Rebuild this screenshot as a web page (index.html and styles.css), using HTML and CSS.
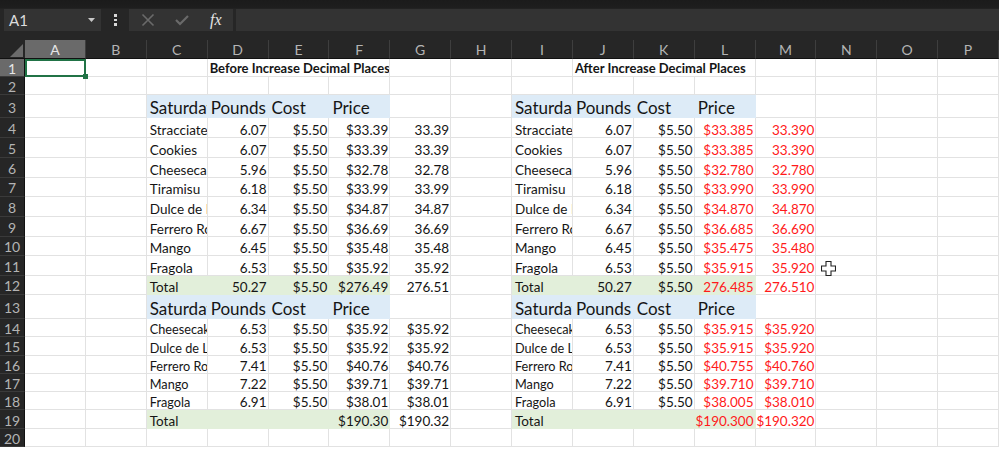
FILE: index.html
```html
<!DOCTYPE html>
<html lang="en">
<head>
<meta charset="utf-8">
<title>Increase Decimal Places</title>
<link rel="stylesheet" href="styles.css">
</head>
<body>
<header class="formula-bar">
  <div class="name-box"><span>A1</span><svg class="caret" width="7" height="4" viewBox="0 0 7 4"><path d="M0 0h7L3.5 4z" fill="#c8c8c8"/></svg></div>
  <div class="dots"><b></b><b></b><b></b></div>
  <div class="buttons">
    <svg class="btn-icon" width="14" height="14" viewBox="0 0 14 14"><path d="M1.500 1.500l11 11M12.500 1.500l-11 11" stroke="#6a6a6a" stroke-width="1.600" fill="none"/></svg>
    <svg class="btn-icon" width="14" height="14" viewBox="0 0 14 14"><path d="M1 7l4 4 8-8" stroke="#6a6a6a" stroke-width="2.200" fill="none"/></svg>
    <span class="fx">fx</span>
  </div>
  <div class="formula-input"></div>
</header>
<main class="sheet">
  <div class="h corner"><svg width="25" height="19" viewBox="0 0 25 19"><path d="M10 17L23 4v13z" fill="#6b6b6b"/></svg></div>
  <div class="h sel">A</div><div class="h">B</div><div class="h">C</div><div class="h">D</div><div class="h">E</div><div class="h">F</div><div class="h">G</div><div class="h">H</div><div class="h">I</div><div class="h">J</div><div class="h">K</div><div class="h">L</div><div class="h">M</div><div class="h">N</div><div class="h">O</div><div class="h">P</div>

  <div class="rh sel">1</div><div class="c active"><span class="handle"></span></div><div class="c"></div><div class="c"></div><div class="c b span3">Before Increase Decimal Places</div><div class="c"></div><div class="c"></div><div class="c"></div><div class="c b span3">After Increase Decimal Places</div><div class="c"></div><div class="c"></div><div class="c"></div><div class="c"></div>

  <div class="rh">2</div><div class="c"></div><div class="c"></div><div class="c"></div><div class="c"></div><div class="c"></div><div class="c"></div><div class="c"></div><div class="c"></div><div class="c"></div><div class="c"></div><div class="c"></div><div class="c"></div><div class="c"></div><div class="c"></div><div class="c"></div><div class="c"></div>

  <div class="rh">3</div><div class="c"></div><div class="c"></div><div class="c hd">Saturday</div><div class="c hd">Pounds</div><div class="c hd">Cost</div><div class="c hd">Price</div><div class="c"></div><div class="c"></div><div class="c hd">Saturday</div><div class="c hd">Pounds</div><div class="c hd">Cost</div><div class="c hd">Price</div><div class="c"></div><div class="c"></div><div class="c"></div><div class="c"></div>

  <div class="rh">4</div><div class="c"></div><div class="c"></div><div class="c">Stracciatella</div><div class="c n">6.07</div><div class="c n">$5.50</div><div class="c n">$33.39</div><div class="c n">33.39</div><div class="c"></div><div class="c">Stracciatella</div><div class="c n">6.07</div><div class="c n">$5.50</div><div class="c n red">$33.385</div><div class="c n red">33.390</div><div class="c"></div><div class="c"></div><div class="c"></div>

  <div class="rh">5</div><div class="c"></div><div class="c"></div><div class="c">Cookies</div><div class="c n">6.07</div><div class="c n">$5.50</div><div class="c n">$33.39</div><div class="c n">33.39</div><div class="c"></div><div class="c">Cookies</div><div class="c n">6.07</div><div class="c n">$5.50</div><div class="c n red">$33.385</div><div class="c n red">33.390</div><div class="c"></div><div class="c"></div><div class="c"></div>

  <div class="rh">6</div><div class="c"></div><div class="c"></div><div class="c">Cheesecake</div><div class="c n">5.96</div><div class="c n">$5.50</div><div class="c n">$32.78</div><div class="c n">32.78</div><div class="c"></div><div class="c">Cheesecake</div><div class="c n">5.96</div><div class="c n">$5.50</div><div class="c n red">$32.780</div><div class="c n red">32.780</div><div class="c"></div><div class="c"></div><div class="c"></div>

  <div class="rh">7</div><div class="c"></div><div class="c"></div><div class="c">Tiramisu</div><div class="c n">6.18</div><div class="c n">$5.50</div><div class="c n">$33.99</div><div class="c n">33.99</div><div class="c"></div><div class="c">Tiramisu</div><div class="c n">6.18</div><div class="c n">$5.50</div><div class="c n red">$33.990</div><div class="c n red">33.990</div><div class="c"></div><div class="c"></div><div class="c"></div>

  <div class="rh">8</div><div class="c"></div><div class="c"></div><div class="c">Dulce de Leche</div><div class="c n">6.34</div><div class="c n">$5.50</div><div class="c n">$34.87</div><div class="c n">34.87</div><div class="c"></div><div class="c">Dulce de Leche</div><div class="c n">6.34</div><div class="c n">$5.50</div><div class="c n red">$34.870</div><div class="c n red">34.870</div><div class="c"></div><div class="c"></div><div class="c"></div>

  <div class="rh">9</div><div class="c"></div><div class="c"></div><div class="c">Ferrero Rocher</div><div class="c n">6.67</div><div class="c n">$5.50</div><div class="c n">$36.69</div><div class="c n">36.69</div><div class="c"></div><div class="c">Ferrero Rocher</div><div class="c n">6.67</div><div class="c n">$5.50</div><div class="c n red">$36.685</div><div class="c n red">36.690</div><div class="c"></div><div class="c"></div><div class="c"></div>

  <div class="rh">10</div><div class="c"></div><div class="c"></div><div class="c">Mango</div><div class="c n">6.45</div><div class="c n">$5.50</div><div class="c n">$35.48</div><div class="c n">35.48</div><div class="c"></div><div class="c">Mango</div><div class="c n">6.45</div><div class="c n">$5.50</div><div class="c n red">$35.475</div><div class="c n red">35.480</div><div class="c"></div><div class="c"></div><div class="c"></div>

  <div class="rh">11</div><div class="c"></div><div class="c"></div><div class="c">Fragola</div><div class="c n">6.53</div><div class="c n">$5.50</div><div class="c n">$35.92</div><div class="c n">35.92</div><div class="c"></div><div class="c">Fragola</div><div class="c n">6.53</div><div class="c n">$5.50</div><div class="c n red">$35.915</div><div class="c n red">35.920</div><div class="c"></div><div class="c"></div><div class="c"></div>

  <div class="rh">12</div><div class="c"></div><div class="c"></div><div class="c tot">Total</div><div class="c tot n">50.27</div><div class="c tot n">$5.50</div><div class="c tot n">$276.49</div><div class="c n">276.51</div><div class="c"></div><div class="c tot">Total</div><div class="c tot n">50.27</div><div class="c tot n">$5.50</div><div class="c tot n red">276.485</div><div class="c n red">276.510</div><div class="c"></div><div class="c"></div><div class="c"></div>

  <div class="rh">13</div><div class="c"></div><div class="c"></div><div class="c hd">Saturday</div><div class="c hd">Pounds</div><div class="c hd">Cost</div><div class="c hd">Price</div><div class="c"></div><div class="c"></div><div class="c hd">Saturday</div><div class="c hd">Pounds</div><div class="c hd">Cost</div><div class="c hd">Price</div><div class="c"></div><div class="c"></div><div class="c"></div><div class="c"></div>

  <div class="rh">14</div><div class="c"></div><div class="c"></div><div class="c sm">Cheesecake</div><div class="c n">6.53</div><div class="c n">$5.50</div><div class="c n">$35.92</div><div class="c n">$35.92</div><div class="c"></div><div class="c sm">Cheesecake</div><div class="c n">6.53</div><div class="c n">$5.50</div><div class="c n red">$35.915</div><div class="c n red">$35.920</div><div class="c"></div><div class="c"></div><div class="c"></div>

  <div class="rh">15</div><div class="c"></div><div class="c"></div><div class="c sm">Dulce de Leche</div><div class="c n">6.53</div><div class="c n">$5.50</div><div class="c n">$35.92</div><div class="c n">$35.92</div><div class="c"></div><div class="c sm">Dulce de Leche</div><div class="c n">6.53</div><div class="c n">$5.50</div><div class="c n red">$35.915</div><div class="c n red">$35.920</div><div class="c"></div><div class="c"></div><div class="c"></div>

  <div class="rh">16</div><div class="c"></div><div class="c"></div><div class="c sm">Ferrero Rocher</div><div class="c n">7.41</div><div class="c n">$5.50</div><div class="c n">$40.76</div><div class="c n">$40.76</div><div class="c"></div><div class="c sm">Ferrero Rocher</div><div class="c n">7.41</div><div class="c n">$5.50</div><div class="c n red">$40.755</div><div class="c n red">$40.760</div><div class="c"></div><div class="c"></div><div class="c"></div>

  <div class="rh">17</div><div class="c"></div><div class="c"></div><div class="c sm">Mango</div><div class="c n">7.22</div><div class="c n">$5.50</div><div class="c n">$39.71</div><div class="c n">$39.71</div><div class="c"></div><div class="c sm">Mango</div><div class="c n">7.22</div><div class="c n">$5.50</div><div class="c n red">$39.710</div><div class="c n red">$39.710</div><div class="c"></div><div class="c"></div><div class="c"></div>

  <div class="rh">18</div><div class="c"></div><div class="c"></div><div class="c sm">Fragola</div><div class="c n">6.91</div><div class="c n">$5.50</div><div class="c n">$38.01</div><div class="c n">$38.01</div><div class="c"></div><div class="c sm">Fragola</div><div class="c n">6.91</div><div class="c n">$5.50</div><div class="c n red">$38.005</div><div class="c n red">$38.010</div><div class="c"></div><div class="c"></div><div class="c"></div>

  <div class="rh">19</div><div class="c"></div><div class="c"></div><div class="c tot">Total</div><div class="c tot"></div><div class="c tot"></div><div class="c tot n">$190.30</div><div class="c n">$190.32</div><div class="c"></div><div class="c tot">Total</div><div class="c tot"></div><div class="c tot"></div><div class="c tot n red">$190.300</div><div class="c n red">$190.320</div><div class="c"></div><div class="c"></div><div class="c"></div>

  <div class="rh">20</div><div class="c"></div><div class="c"></div><div class="c"></div><div class="c"></div><div class="c"></div><div class="c"></div><div class="c"></div><div class="c"></div><div class="c"></div><div class="c"></div><div class="c"></div><div class="c"></div><div class="c"></div><div class="c"></div><div class="c"></div><div class="c"></div>

  <svg class="cursor" width="15" height="15" viewBox="0 0 15 15"><path d="M5 .5h5v4.500h4.500v5H10v4.500H5V10H.5V5H5z" fill="#fff" stroke="#222" stroke-width="1.100"/></svg>
</main>
</body>
</html>
```
FILE: styles.css
```css
* { box-sizing: border-box; }
html, body { margin: 0; height: 100%; }
body {
  width: 999px;
  height: 449px;
  overflow: hidden;
  background: #262626;
  font-family: "Lato", "Liberation Sans", sans-serif;
}
.formula-bar {
  height: 40px;
  padding: 9px 0 9px 4px;
  display: flex;
  align-items: stretch;
  background: linear-gradient(#1b1b1b 0, #1e1e1e 8px, #262626 9px);
}
.name-box {
  width: 97px;
  background: #333;
  color: #dcdcdc;
  font-size: 15px;
  padding: 0 6px 0 5px;
  display: flex;
  align-items: center;
  justify-content: space-between;
}
.dots {
  width: 28px;
  display: flex;
  flex-direction: column;
  align-items: center;
  justify-content: center;
  gap: 2px;
}
.dots b { width: 3px; height: 2.500px; background: #d8d8d8; }
.buttons {
  width: 104px;
  background: #333;
  display: flex;
  align-items: center;
  padding-left: 12px;
  gap: 20px;
}
.fx {
  font-family: "Liberation Serif", serif;
  font-style: italic;
  font-size: 16px;
  color: #e4e4e4;
  margin-left: 1px;
}
.formula-input { flex: 1; margin-left: 3px; background: #333; }
.sheet {
  position: relative;
  height: 409px;
  display: grid;
  grid-template-columns: 25px repeat(16, 60.875px);
  grid-template-rows: 18.7px 18.8px 18px 23px repeat(8, 19.7px) 19px 24px repeat(7, 18.3px) 1fr;
  background: #fff;
  font-size: 13.500px;
  color: #151515;
}
.h, .rh {
  background: #262626;
  color: #b4b4b4;
  font-size: 14px;
  display: flex;
  align-items: center;
  justify-content: center;
}
.h { border-right: 1px solid #3e3e3e; border-bottom: 1px solid #111; padding-top: 2px; }
.rh { border-bottom: 1px solid #3a3a3a; border-right: 1px solid #111; padding-top: 2px; }
.h.sel, .rh.sel { background: #6a6a6a; color: #e6e6e6; }
.corner { align-items: stretch; border-right: 0; padding-top: 0; }
.c {
  position: relative;
  display: flex;
  align-items: flex-end;
  min-width: 0;
  overflow: hidden;
  white-space: nowrap;
  line-height: 14px;
  padding-left: 3px;
  border-right: 1px solid #e2e2e2;
  border-bottom: 1px solid #e2e2e2;
}
.n { justify-content: flex-end; padding-left: 0; padding-right: 1px; }
.sm { font-size: 12.700px; }
.b { font-weight: 700; font-size: 13px; padding-left: 2px; padding-bottom: 1px; }
.span3 { grid-column: span 3; }
.hd { background: #ddebf7; border-color: #ddebf7; font-size: 17px; line-height: 18px; }
.tot { background: #e2efda; border-color: #e2efda; }
.red { color: #ff1a1a; }
.active { overflow: visible; border: 2px solid #217346; z-index: 1; }
.handle {
  position: absolute;
  right: -4px;
  bottom: -4px;
  width: 5px;
  height: 5px;
  background: #217346;
}
.cursor { position: absolute; left: 821px; top: 221px; }
```
